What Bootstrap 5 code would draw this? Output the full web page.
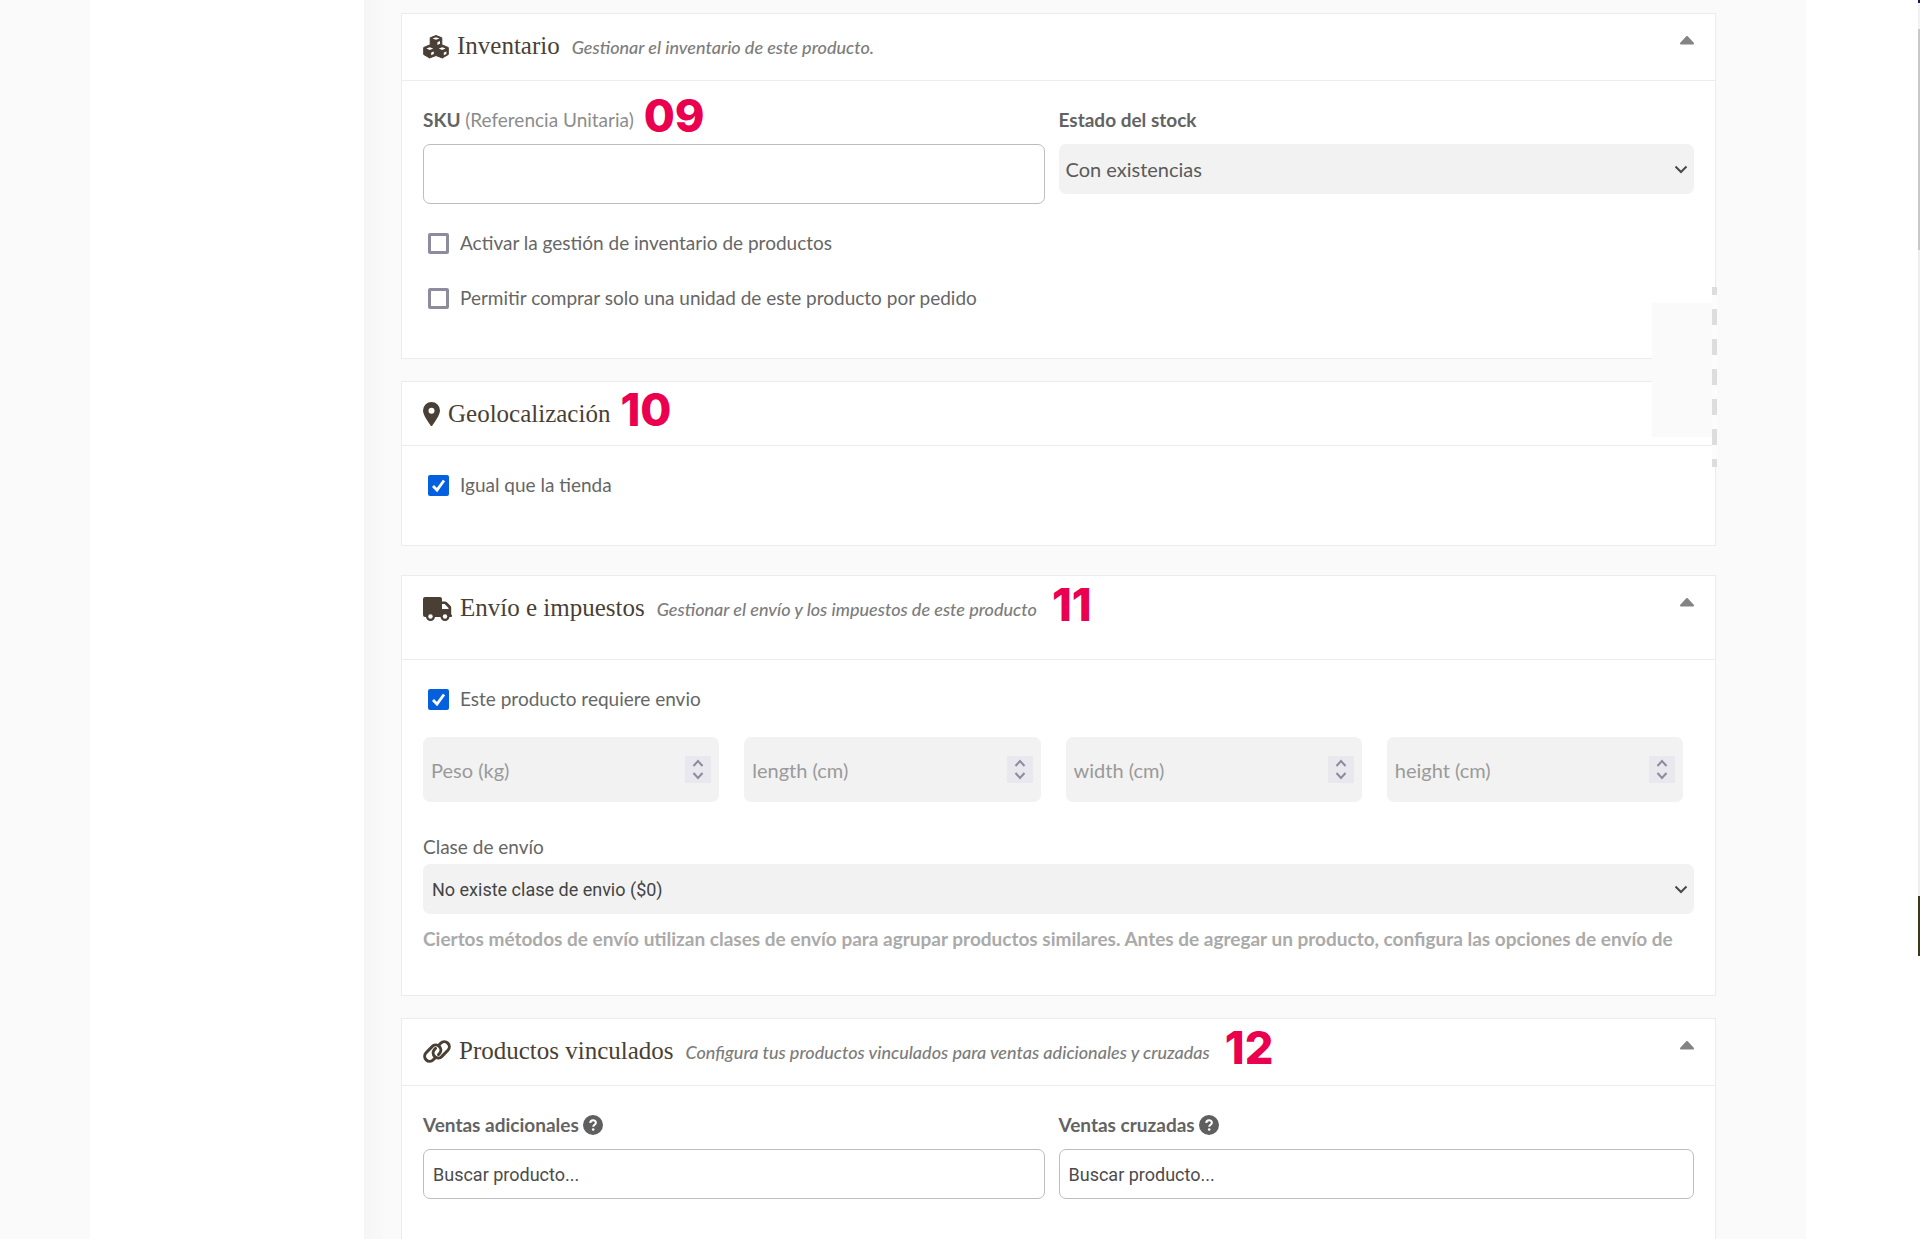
<!DOCTYPE html>
<html lang="es">
<head>
<meta charset="utf-8">
<meta name="viewport" content="width=device-width, initial-scale=1">
<title>Editar producto</title>
<link href="https://cdn.jsdelivr.net/npm/bootstrap@5.3.0/dist/css/bootstrap.min.css" rel="stylesheet">
<style>
  body { font-family: Lato, "Open Sans", sans-serif; font-size: 19px; line-height: 28px; color: #666; background: #fff; }
  .edge-left { width: 90px; background: #fafafa; }
  .side-nav { width: 274px; background: #fff; }
  .edge-right { width: 112px; background: #fff; }
  .scroll-strip { width: 2px; }
  .strip-top { height: 3px; background: #1d1450; }
  .strip-track { height: 26px; background: #f1f1f1; }
  .strip-thumb { height: 221px; background: #c9c9c9; }
  .strip-rest { height: 646px; background: #eee; }
  .strip-tab { height: 60px; background: #3d3820; }
  .panel-area { background: linear-gradient(90deg, #f5f5f5, #fafafa 22px); padding: 13px 90px 0 37px; min-width: 0; }
  .panel { background: #fff; border: 1px solid #ececec; margin-bottom: 22px; }
  .panel-gap { margin-bottom: 29px; }
  .panel-head { padding: 17px 21px 18px; border-bottom: 1px solid #ececec; line-height: 30px; }
  .head-short { padding-bottom: 16px; }
  .head-tall { padding-bottom: 35px; }
  .panel-title { font-family: "Liberation Serif", serif; font-size: 25px; line-height: 30px; font-weight: 400; color: #4a3f35; margin: 0; }
  .panel-note { font-size: 18px; font-style: italic; font-weight: 500; color: #7c7c7c; margin: 0 5px 0 12px; }
  .panel-icon { height: 24px; fill: #4a3f35; margin-right: 8px; flex: none; }
  .step-no { font-family: Inter, sans-serif; font-size: 45px; line-height: 28px; font-weight: 800; color: #ea004f; margin: -8px 0 0 10px; }
  .panel-body { padding: 25px 21px 46px; }
  .body-short { padding-bottom: 42px; }
  .toggle { border: 0; background: none; padding: 0; height: 18px; width: 14px; }
  .field { border: 1px solid #bdbdbd; border-radius: 7px; height: 50px; font-family: Roboto, sans-serif; font-size: 18px; padding: 0 9px; color: #444; }
  .field::placeholder { color: #4b4b4b; opacity: 1; }
  .field-tall { height: 60px; }
  .label-row { height: 28px; margin-bottom: 10px; }
  .label-row label { font-weight: 700; color: #636363; }
  .label-row label .soft { font-weight: 400; color: #8c8c8c; }
  .half-left { padding-right: 14px; }
  .pick { height: 50px; border: 0; border-radius: 7px; font-size: 20px; color: #5a5a5a; padding: 0 30px 0 7px;
    background: #f2f2f2 url("data:image/svg+xml,%3Csvg xmlns='http://www.w3.org/2000/svg' viewBox='0 0 14 9'%3E%3Cpath d='M1.500 1.500 7 7l5.500-5.500' fill='none' stroke='%23484848' stroke-width='2'/%3E%3C/svg%3E") no-repeat right 6px center / 14px 9px; }
  .pick-plain { font-family: Roboto, sans-serif; font-size: 18px; color: #444; padding-left: 9px; }
  .tick-row { gap: 11px; padding-left: 5px; }
  .tick-row + .tick-row { margin-top: 27px; }
  .tick { width: 21px; height: 21px; margin: 0; border: 3px solid #8f8b9f; flex: none; }
  .tick.form-check-input { border-radius: 2px; }
  .tick:checked { background-color: #0560df; border-color: #0560df; background-size: 21px 21px; background-position: center;
    background-image: url("data:image/svg+xml,%3Csvg xmlns='http://www.w3.org/2000/svg' viewBox='0 0 21 21'%3E%3Cpath d='M5 11l4 4 7-9.500' fill='none' stroke='white' stroke-width='2.800'/%3E%3C/svg%3E"); }
  .ticks-top { margin-top: 25px; }
  .sizes { gap: 25px; margin-top: 24px; padding-right: 11px; }
  .measure { height: 65px; border: 0; border-radius: 7px; background: #f2f2f2; font-size: 20px; padding: 0 44px 0 8px; appearance: textfield; }
  .measure::-webkit-inner-spin-button { appearance: none; }
  .measure::placeholder { color: #9a9a9a; opacity: 1; }
  .stepper { right: 8px; width: 26px; height: 27px; background: #e8e8ee; }
  .stepper button { border: 0; background: none; padding: 0; height: 13px; line-height: 0; }
  .line-icon { fill: none; stroke: #8d8b9c; stroke-width: 2; }
  .class-label { margin-top: 31px; margin-bottom: 3px; display: block; }
  .help-line { margin: 11px 0 0; color: #aaa; font-weight: 700; }
  .help-dot { width: 20px; height: 20px; margin-left: 4px; }
  .peek { right: 89px; top: 287px; width: 65px; height: 180px; }
  .peek-block { width: 60px; height: 134px; margin-top: 16px; background: #fafafa; }
  .peek-dash { width: 5px; background: repeating-linear-gradient(#ddd 0 8px, #fcfcfc 8px 22px, #ddd 22px 30px); }
</style>
</head>
<body>
<div class="d-flex min-vh-100">
  <div class="edge-left flex-shrink-0"></div>
  <aside class="side-nav flex-shrink-0"></aside>

  <main class="panel-area flex-grow-1 position-relative">
    <section class="panel">
      <header class="panel-head d-flex align-items-center">
        <svg class="panel-icon" width="26" viewBox="0 0 26 24" aria-hidden="true">
          <path d="M13 .5l5.800 2.300v7L25.300 12.500v7L19.300 23 13 20.500 6.700 23 .7 19.500v-7L7.200 9.800v-7z" stroke="#4a3f35" stroke-linejoin="round"/>
          <path d="M9.500 3.500l3.500-1.300 3.500 1.300L13 4.800zM3.400 13.500l3.400-1.300 3.400 1.300-3.400 1.400zM15.800 13.500l3.400-1.300 3.400 1.300-3.400 1.400zM14.400 7.200l2.600-1.100v2.600l-2.600 1.200zM8.200 17.500l2.600-1.100V19l-2.600 1.300zM20.800 17.500l2.600-1.100V19l-2.600 1.300z" fill="#fff"/>
        </svg>
        <div class="d-flex align-items-baseline">
          <h2 class="panel-title">Inventario</h2>
          <span class="panel-note">Gestionar el inventario de este producto.</span>
        </div>
        <button type="button" class="toggle ms-auto align-self-start d-flex align-items-center" aria-label="Contraer inventario"><svg width="14" height="9" viewBox="0 0 14 9"><path d="M7 1 13 7.500H1z" fill="#848484" stroke="#848484" stroke-width="2" stroke-linejoin="round"/></svg></button>
      </header>
      <div class="panel-body">
        <div class="row g-0">
          <div class="col-6 half-left">
            <div class="label-row d-flex align-items-center">
              <label for="sku">SKU <span class="soft">(Referencia Unitaria)</span></label>
              <span class="step-no">09</span>
            </div>
            <input id="sku" type="text" class="form-control field field-tall">
          </div>
          <div class="col-6">
            <div class="label-row"><label for="stock">Estado del stock</label></div>
            <select id="stock" class="form-select pick"><option>Con existencias</option></select>
          </div>
        </div>
        <div class="ticks-top">
          <div class="tick-row d-flex align-items-center">
            <input class="form-check-input tick" type="checkbox" id="manage"><label for="manage">Activar la gestión de inventario de productos</label>
          </div>
          <div class="tick-row d-flex align-items-center">
            <input class="form-check-input tick" type="checkbox" id="single"><label for="single">Permitir comprar solo una unidad de este producto por pedido</label>
          </div>
        </div>
      </div>
    </section>

    <section class="panel panel-gap">
      <header class="panel-head head-short d-flex align-items-center">
        <svg class="panel-icon" width="17" viewBox="0 0 17 24" aria-hidden="true"><path fill-rule="evenodd" d="M8.500 0A8.500 8.500 0 0 1 17 8.500C17 13 11.500 20.500 9.400 23.400a1.100 1.100 0 0 1-1.800 0C5.500 20.500 0 13 0 8.500A8.500 8.500 0 0 1 8.500 0zm0 5.800a3 3 0 1 0 0 6 3 3 0 0 0 0-6z"/></svg>
        <h2 class="panel-title">Geolocalización</h2>
        <span class="step-no">10</span>
      </header>
      <div class="panel-body">
        <div class="tick-row d-flex align-items-center">
          <input class="form-check-input tick" type="checkbox" id="sameplace" checked><label for="sameplace">Igual que la tienda</label>
        </div>
      </div>
    </section>

    <section class="panel">
      <header class="panel-head head-tall d-flex align-items-center">
        <svg class="panel-icon" width="29" viewBox="0 0 29 24" aria-hidden="true">
          <path fill-rule="evenodd" d="M2 0h15a2 2 0 0 1 2 2v2.500h3.200a2 2 0 0 1 1.400.6l4 4a2 2 0 0 1 .6 1.400V17.500a1.300 1.300 0 0 1 0 2.500H2a2 2 0 0 1-2-2V2a2 2 0 0 1 2-2zm17 7V12h6.500v-.9L21.700 7z"/>
          <circle cx="7.500" cy="19.500" r="4.500"/><circle cx="22" cy="19.500" r="4.500"/>
          <circle cx="7.500" cy="19.500" r="2.200" fill="#fff"/><circle cx="22" cy="19.500" r="2.200" fill="#fff"/>
        </svg>
        <div class="d-flex align-items-baseline">
          <h2 class="panel-title">Envío e impuestos</h2>
          <span class="panel-note">Gestionar el envío y los impuestos de este producto</span>
        </div>
        <span class="step-no">11</span>
        <button type="button" class="toggle ms-auto align-self-start d-flex align-items-center" aria-label="Contraer envío"><svg width="14" height="9" viewBox="0 0 14 9"><path d="M7 1 13 7.500H1z" fill="#848484" stroke="#848484" stroke-width="2" stroke-linejoin="round"/></svg></button>
      </header>
      <div class="panel-body body-short">
        <div class="tick-row d-flex align-items-center">
          <input class="form-check-input tick" type="checkbox" id="ships" checked><label for="ships">Este producto requiere envio</label>
        </div>
        <div class="sizes d-flex">
          <div class="flex-fill w-100 position-relative d-flex align-items-center">
            <input type="number" class="form-control measure" placeholder="Peso (kg)" aria-label="Peso (kg)">
            <div class="stepper position-absolute d-flex flex-column"><button type="button" aria-label="Más"><svg class="line-icon" width="12" height="8" viewBox="0 0 12 8"><path d="M1.500 7 6 2l4.500 5"/></svg></button><button type="button" aria-label="Menos"><svg class="line-icon" width="12" height="8" viewBox="0 0 12 8"><path d="M1.500 1 6 6l4.500-5"/></svg></button></div>
          </div>
          <div class="flex-fill w-100 position-relative d-flex align-items-center">
            <input type="number" class="form-control measure" placeholder="length (cm)" aria-label="length (cm)">
            <div class="stepper position-absolute d-flex flex-column"><button type="button" aria-label="Más"><svg class="line-icon" width="12" height="8" viewBox="0 0 12 8"><path d="M1.500 7 6 2l4.500 5"/></svg></button><button type="button" aria-label="Menos"><svg class="line-icon" width="12" height="8" viewBox="0 0 12 8"><path d="M1.500 1 6 6l4.500-5"/></svg></button></div>
          </div>
          <div class="flex-fill w-100 position-relative d-flex align-items-center">
            <input type="number" class="form-control measure" placeholder="width (cm)" aria-label="width (cm)">
            <div class="stepper position-absolute d-flex flex-column"><button type="button" aria-label="Más"><svg class="line-icon" width="12" height="8" viewBox="0 0 12 8"><path d="M1.500 7 6 2l4.500 5"/></svg></button><button type="button" aria-label="Menos"><svg class="line-icon" width="12" height="8" viewBox="0 0 12 8"><path d="M1.500 1 6 6l4.500-5"/></svg></button></div>
          </div>
          <div class="flex-fill w-100 position-relative d-flex align-items-center">
            <input type="number" class="form-control measure" placeholder="height (cm)" aria-label="height (cm)">
            <div class="stepper position-absolute d-flex flex-column"><button type="button" aria-label="Más"><svg class="line-icon" width="12" height="8" viewBox="0 0 12 8"><path d="M1.500 7 6 2l4.500 5"/></svg></button><button type="button" aria-label="Menos"><svg class="line-icon" width="12" height="8" viewBox="0 0 12 8"><path d="M1.500 1 6 6l4.500-5"/></svg></button></div>
          </div>
        </div>
        <label class="class-label" for="shipclass">Clase de envío</label>
        <select id="shipclass" class="form-select pick pick-plain"><option>No existe clase de envio ($0)</option></select>
        <p class="help-line">Ciertos métodos de envío utilizan clases de envío para agrupar productos similares. Antes de agregar un producto, configura las opciones de envío de</p>
      </div>
    </section>

    <section class="panel mb-0">
      <header class="panel-head d-flex align-items-center">
        <svg class="panel-icon" width="28" viewBox="0 0 28 24" aria-hidden="true">
          <g fill="none" stroke="#4a3f35" stroke-width="3" stroke-linecap="round">
            <path d="M12.500 17.500l-2.200 2.300a5 5 0 0 1-7.200-7l6-6.200a5 5 0 0 1 7.400 6.800l-1 1.200"/>
            <path d="M15.500 5.500l2.200-2.300a5 5 0 0 1 7.200 7l-6 6.200a5 5 0 0 1-7.400-6.800l1-1.200"/>
          </g>
        </svg>
        <div class="d-flex align-items-baseline">
          <h2 class="panel-title">Productos vinculados</h2>
          <span class="panel-note">Configura tus productos vinculados para ventas adicionales y cruzadas</span>
        </div>
        <span class="step-no">12</span>
        <button type="button" class="toggle ms-auto align-self-start d-flex align-items-center" aria-label="Contraer vinculados"><svg width="14" height="9" viewBox="0 0 14 9"><path d="M7 1 13 7.500H1z" fill="#848484" stroke="#848484" stroke-width="2" stroke-linejoin="round"/></svg></button>
      </header>
      <div class="panel-body body-short row g-0">
        <div class="col-6 half-left">
          <div class="label-row d-flex align-items-center">
            <label for="upsell">Ventas adicionales</label>
            <svg class="help-dot" viewBox="0 0 20 20" aria-hidden="true"><circle cx="10" cy="10" r="10" fill="#5f5f5f"/><path d="M7.300 8c0-3.700 5.600-3.500 5.600-.3 0 2-2.700 2-2.700 4" fill="none" stroke="#fff" stroke-width="2"/><circle cx="10.200" cy="14.500" r="1.300" fill="#fff"/></svg>
          </div>
          <input id="upsell" type="text" class="form-control field" placeholder="Buscar producto...">
        </div>
        <div class="col-6">
          <div class="label-row d-flex align-items-center">
            <label for="cross">Ventas cruzadas</label>
            <svg class="help-dot" viewBox="0 0 20 20" aria-hidden="true"><circle cx="10" cy="10" r="10" fill="#5f5f5f"/><path d="M7.300 8c0-3.700 5.600-3.500 5.600-.3 0 2-2.700 2-2.700 4" fill="none" stroke="#fff" stroke-width="2"/><circle cx="10.200" cy="14.500" r="1.300" fill="#fff"/></svg>
          </div>
          <input id="cross" type="text" class="form-control field" placeholder="Buscar producto...">
        </div>
      </div>
    </section>

    <div class="peek position-absolute d-flex" aria-hidden="true">
      <div class="peek-block"></div>
      <div class="peek-dash"></div>
    </div>
  </main>

  <div class="edge-right flex-shrink-0"></div>
  <div class="scroll-strip flex-shrink-0">
    <div class="strip-top"></div><div class="strip-track"></div><div class="strip-thumb"></div><div class="strip-rest"></div><div class="strip-tab"></div>
  </div>
</div>
<script src="https://cdn.jsdelivr.net/npm/bootstrap@5.3.0/dist/js/bootstrap.bundle.min.js"></script>
</body>
</html>
